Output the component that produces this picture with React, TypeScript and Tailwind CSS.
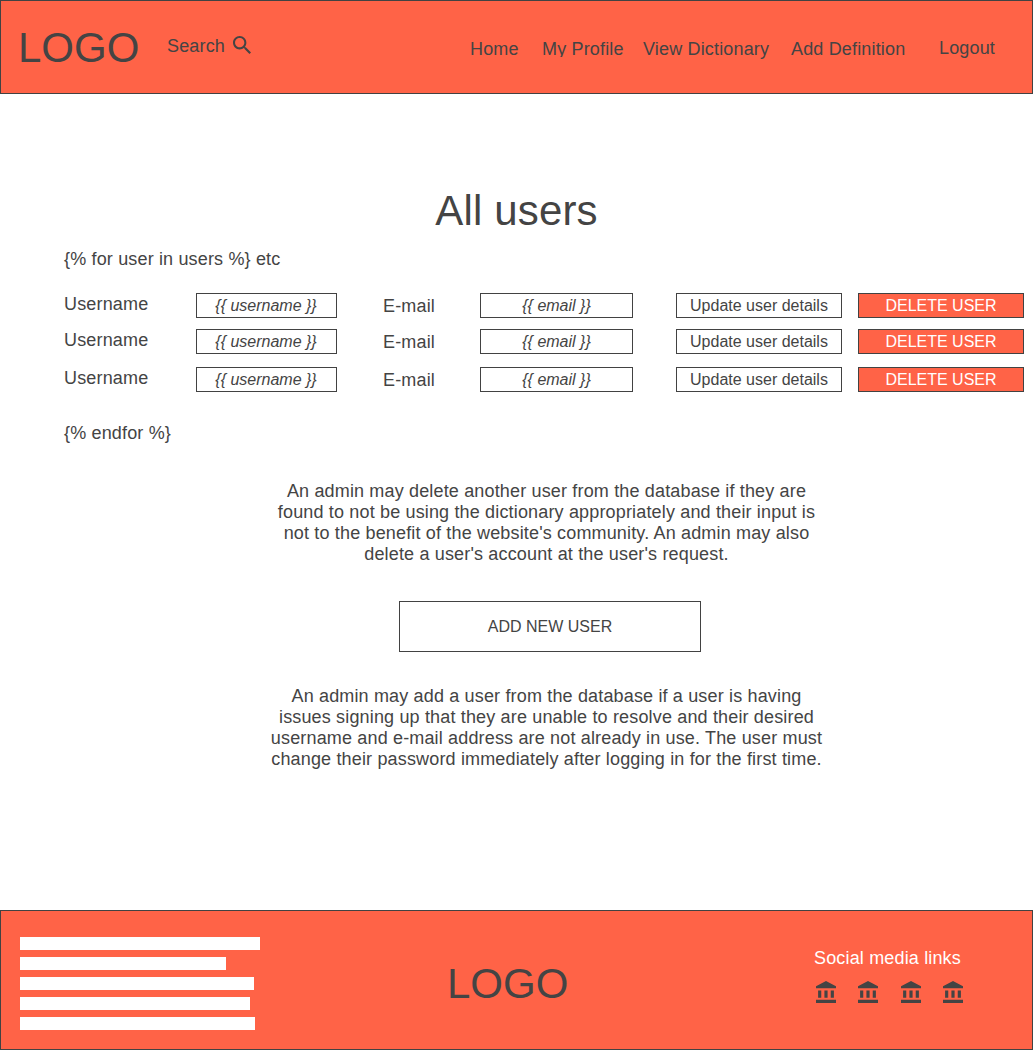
import React from "react";

const rows = ["mt-[23px]", "mt-[11px]", "mt-[13px]"];
const bars = ["w-[240px]", "w-[206px]", "w-[234px]", "w-[230px]", "w-[235px]"];
const links = ["ml-[2px]", "ml-[22px]", "ml-[23px]", "ml-[22px]"];

function SearchIcon() {
  return (
    <svg
      viewBox="3 3 17.49 17.49"
      fill="currentColor"
      className="mt-[35px] ml-[3px] size-[18px] shrink-0"
    >
      <path d="M15.5 14h-.79l-.28-.27C15.41 12.59 16 11.11 16 9.5 16 5.91 13.09 3 9.5 3S3 5.91 3 9.5 5.91 16 9.5 16c1.61 0 3.09-.59 4.23-1.57l.27.28v.79l5 4.99L20.49 19l-4.99-5zm-6 0C7.01 14 5 11.99 5 9.5S7.01 5 9.5 5 14 7.01 14 9.5 11.99 14 9.5 14z" />
    </svg>
  );
}

function BankIcon({ spacing }: { spacing: string }) {
  return (
    <svg
      viewBox="2 1 19 21"
      preserveAspectRatio="none"
      fill="currentColor"
      className={`h-[22px] w-[20px] ${spacing}`}
    >
      <path d="M4 10v7h3v-7H4zm6 0v7h3v-7h-3zM2 22h19v-3H2v3zm14-12v7h3v-7h-3zm-4.5-9L2 6v2h19V6l-9.5-5z" />
    </svg>
  );
}

function UserRow({ spacing }: { spacing: string }) {
  return (
    <div className={`flex h-[25px] ${spacing}`}>
      <span className="w-[132px] pt-px">Username</span>
      <div className="flex w-[141px] items-center justify-center border border-[#424242] pr-px text-base tracking-normal italic">
        {"{{ username }}"}
      </div>
      <span className="ml-[46px] w-[97px] pt-[3px]">E-mail</span>
      <div className="flex w-[153px] items-center justify-center border border-[#424242] text-base tracking-normal italic">
        {"{{ email }}"}
      </div>
      <button className="ml-[43px] flex w-[166px] items-center justify-center border border-[#424242] text-base tracking-normal">
        Update user details
      </button>
      <button className="ml-4 flex w-[166px] items-center justify-center border border-[#424242] bg-[#ff6347] text-base tracking-normal text-white">
        DELETE USER
      </button>
    </div>
  );
}

export default function App() {
  return (
    <div className="flex h-[1050px] w-[1033px] flex-col overflow-hidden bg-white font-['Liberation_Sans',Arial,sans-serif] text-[18px] leading-[21px] tracking-[0.16px] whitespace-nowrap text-[#444]">
      <header className="flex h-[94px] shrink-0 items-start border border-[#424242] bg-[#ff6347]">
        <div className="mt-[23px] ml-[17px] w-[149px] text-[42px] leading-[48px] tracking-normal">LOGO</div>
        <span className="mt-[35px] w-[63px]">Search</span>
        <SearchIcon />
        <nav className="ml-[219px] flex pt-[38px]">
          <a className="w-[72px]">Home</a>
          <a className="h-[18px] w-[101px] overflow-hidden">My Profile</a>
          <a className="w-[148px]">View Dictionary</a>
          <a className="w-[148px]">Add Definition</a>
          <a className="-mt-px">Logout</a>
        </nav>
      </header>

      <main className="flex flex-1 flex-col pt-[93px] pl-16">
        <h1 className="-ml-16 h-[48px] text-center text-[42px] leading-[48px]">All users</h1>
        <p className="mt-[14px]">{"{% for user in users %} etc"}</p>
        {rows.map((spacing) => (
          <UserRow key={spacing} spacing={spacing} />
        ))}
        <p className="mt-[31px]">{"{% endfor %}"}</p>
        <p className="mt-[37px] ml-[182.5px] w-[600px] text-center">
          An admin may delete another user from the database if they are
          <br />
          found to not be using the dictionary appropriately and their input is
          <br />
          not to the benefit of the website's community. An admin may also
          <br />
          delete a user's account at the user's request.
        </p>
        <button className="mt-[36px] ml-[335px] h-[51px] w-[302px] border border-[#424242] text-base tracking-normal">
          ADD NEW USER
        </button>
        <p className="mt-[34px] ml-[182.5px] w-[600px] text-center">
          An admin may add a user from the database if a user is having
          <br />
          issues signing up that they are unable to resolve and their desired
          <br />
          username and e-mail address are not already in use. The user must
          <br />
          change their password immediately after logging in for the first time.
        </p>
      </main>

      <footer className="flex h-[140px] shrink-0 items-start border border-[#424242] bg-[#ff6347]">
        <div className="mt-[26px] ml-[19px] flex w-[427px] flex-col gap-[7px]">
          {bars.map((width) => (
            <div key={width} className={`h-[13px] bg-white ${width}`} />
          ))}
        </div>
        <div className="mt-[49px] w-[367px] text-[42px] leading-[48px] tracking-normal">LOGO</div>
        <div className="mt-[37px] text-white">
          <p>Social media links</p>
          <div className="mt-[12px] flex text-[#444]">
            {links.map((spacing, i) => (
              <BankIcon key={i} spacing={spacing} />
            ))}
          </div>
        </div>
      </footer>
    </div>
  );
}
